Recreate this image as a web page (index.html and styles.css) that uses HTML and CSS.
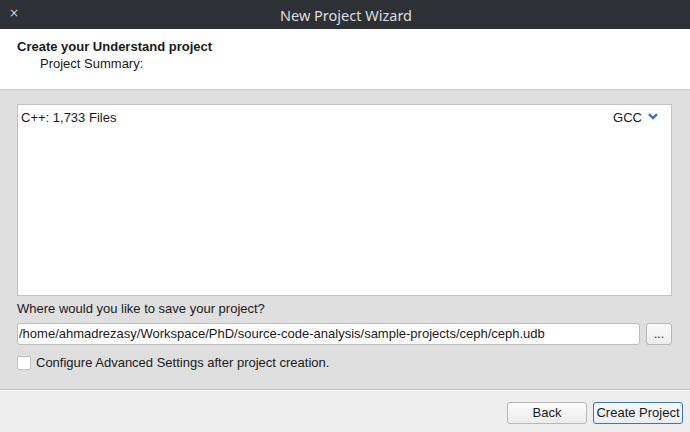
FILE: index.html
```html
<!DOCTYPE html>
<html>
<head>
<meta charset="utf-8">
<link rel="stylesheet" href="styles.css">
</head>
<body>
<div class="window">
  <div class="titlebar">
    <span class="close">×</span>
    <span class="title">New Project Wizard</span>
  </div>
  <div class="header">
    <div class="h-title">Create your Understand project</div>
    <div class="h-sub">Project Summary:</div>
  </div>
  <div class="main">
    <div class="summary">
      <div class="row">
        <span>C++: 1,733 Files</span>
        <span class="compiler">GCC
          <svg class="chev" width="10" height="7" viewBox="0 0 10 7"><path d="M1 1.2 L5 5 L9 1.2" fill="none" stroke="#3b6fc9" stroke-width="2.4"/></svg>
        </span>
      </div>
    </div>
    <div class="label">Where would you like to save your project?</div>
    <div class="pathrow">
      <div class="input">/home/ahmadrezasy/Workspace/PhD/source-code-analysis/sample-projects/ceph/ceph.udb</div>
      <div class="browse">...</div>
    </div>
    <div class="checkrow">
      <span class="checkbox"></span>
      <span>Configure Advanced Settings after project creation.</span>
    </div>
  </div>
  <div class="footer">
    <div class="btn back">Back</div>
    <div class="btn primary">Create Project</div>
  </div>
</div>
</body>
</html>
```
FILE: styles.css
```css
html, body {
  margin: 0;
  padding: 0;
}
body {
  width: 690px;
  height: 432px;
  overflow: hidden;
  font-family: "Liberation Sans", Arial, sans-serif;
  font-size: 13px;
  color: #1a1a1a;
}
.window {
  display: flex;
  flex-direction: column;
  height: 432px;
}
.titlebar {
  height: 29px;
  background: #2d3135;
  display: flex;
  align-items: center;
  position: relative;
  color: #dcdcdc;
}
.close {
  position: absolute;
  left: 9px;
  top: 7px;
  line-height: 12px;
  font-family: "DejaVu Sans", sans-serif;
  font-size: 12px;
  color: #d0d0d0;
}
.title {
  flex: 1;
  text-align: center;
  font-family: "Noto Sans", "Open Sans", sans-serif;
  font-size: 14.5px;
  color: #dedede;
  padding-left: 2px;
}
.header {
  background: #ffffff;
  border-bottom: 1px solid #c6c6c6;
  padding: 10px 0 0 17px;
  box-sizing: border-box;
  height: 61px;
}
.h-title {
  font-weight: bold;
  line-height: 16px;
}
.h-sub {
  line-height: 16px;
  padding-left: 23px;
  margin-top: 1px;
}
.main {
  background: #dfdfdf;
  height: 299px;
  padding: 14px 18px 0 17px;
  box-sizing: border-box;
  display: flex;
  flex-direction: column;
}
.summary {
  height: 192px;
  background: #ffffff;
  border: 1px solid #c2c2c2;
  box-sizing: border-box;
  padding: 5px 13px 0 3px;
}
.row {
  display: flex;
  justify-content: space-between;
  line-height: 16px;
}
.compiler {
  display: flex;
  align-items: center;
  gap: 6px;
}
.chev {
  margin-top: -3px;
}
.label {
  margin-top: 5px;
  line-height: 16px;
}
.pathrow {
  display: flex;
  gap: 6px;
  margin-top: 6px;
}
.input {
  width: 623px;
  height: 22px;
  box-sizing: border-box;
  background: #ffffff;
  border: 1px solid #bdbdbd;
  border-radius: 3px;
  padding: 0 0 0 1px;
  line-height: 20px;
  white-space: nowrap;
  overflow: hidden;
}
.browse {
  width: 26px;
  height: 22px;
  box-sizing: border-box;
  border: 1px solid #b8b8b8;
  border-radius: 3px;
  background: linear-gradient(#fbfbfb, #ececec);
  text-align: center;
  line-height: 20px;
  font-size: 12px;
}
.checkrow {
  display: flex;
  align-items: center;
  gap: 5px;
  margin-top: 10px;
  line-height: 16px;
}
.checkbox {
  width: 14px;
  height: 14px;
  box-sizing: border-box;
  background: #ffffff;
  border: 1px solid #c4c4c4;
  border-radius: 2px;
}
.footer {
  flex: 1;
  background: #eeeeee;
  border-top: 1px solid #c2c2c2;
  display: flex;
  justify-content: flex-end;
  align-items: flex-start;
  gap: 6px;
  padding: 12px 7px 0 0;
  box-sizing: border-box;
  box-shadow: inset 0 1px 0 #fafafa;
}
.btn {
  height: 22px;
  box-sizing: border-box;
  border: 1px solid #b8b8b8;
  border-radius: 3px;
  background: linear-gradient(#fcfcfc, #ececec);
  line-height: 20px;
  text-align: center;
}
.back {
  width: 80px;
}
.primary {
  width: 90px;
  border-color: #3d78b0;
  background: linear-gradient(#f6f9fc, #e6eef6);
}
```
